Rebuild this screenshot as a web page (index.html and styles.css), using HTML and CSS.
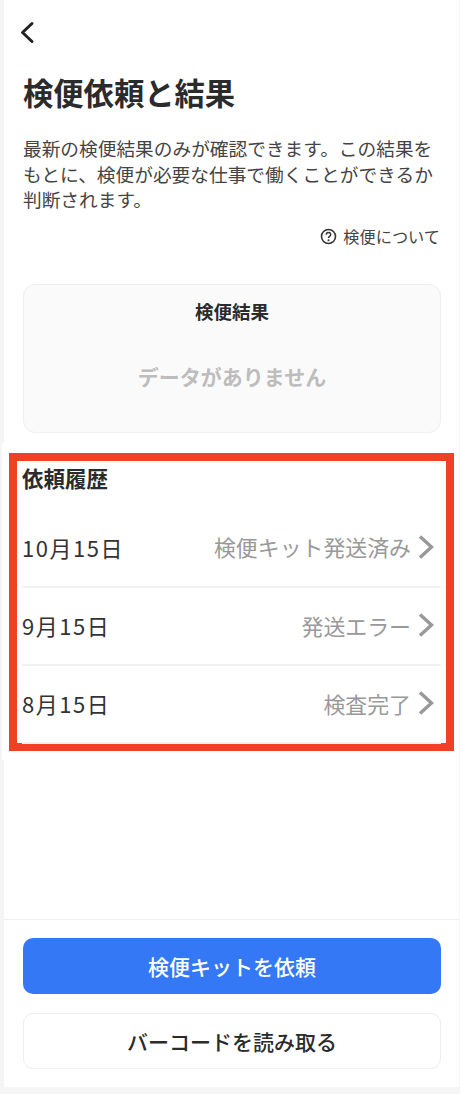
FILE: index.html
```html
<!DOCTYPE html>
<html lang="ja">
<head>
    <meta charset="UTF-8">
    <meta name="viewport" content="width=device-width, initial-scale=1.0">
    <title>検便依頼と結果</title>
    <link rel="stylesheet" href="styles.css">
</head>
<body>
    <div class="screen">
        <div class="top">
            <a class="back" href="#">
                <svg width="16" height="24" viewBox="0 0 16 24"><path d="M13 2.5 3.5 11.5l9.5 9" fill="none" stroke="#222" stroke-width="3" stroke-linecap="round" stroke-linejoin="round"/></svg>
            </a>
            <h1>検便依頼と結果</h1>
            <p class="lead">最新の検便結果のみが確認できます。この結果をもとに、検便が必要な仕事で働くことができるか判断されます。</p>
            <a class="help" href="#">
                <svg width="17" height="17" viewBox="0 0 17 17"><circle cx="8.5" cy="8.5" r="7" fill="none" stroke="#333" stroke-width="1.6"/><path d="M6.3 6.7c0-1.3 1-2.1 2.2-2.1s2.2.8 2.2 2c0 1.7-2.2 1.7-2.2 3.4" fill="none" stroke="#333" stroke-width="1.5"/><circle cx="8.5" cy="12.3" r="1" fill="#333"/></svg>
                検便について
            </a>
            <div class="result-card">
                <h2>検便結果</h2>
                <p class="empty">データがありません</p>
            </div>
        </div>

        <div class="history-wrap">
            <section class="history">
                <h2>依頼履歴</h2>
                <div class="row">
                    <span class="date">10月15日</span>
                    <span class="status">検便キット発送済み</span>
                    <svg class="chevron" width="16" height="24" viewBox="0 0 16 24"><path d="M2 1.5 13.5 12 2 22.5" fill="none" stroke="#999" stroke-width="3.4"/></svg>
                </div>
                <div class="row">
                    <span class="date">9月15日</span>
                    <span class="status">発送エラー</span>
                    <svg class="chevron" width="16" height="24" viewBox="0 0 16 24"><path d="M2 1.5 13.5 12 2 22.5" fill="none" stroke="#999" stroke-width="3.4"/></svg>
                </div>
                <div class="row">
                    <span class="date">8月15日</span>
                    <span class="status">検査完了</span>
                    <svg class="chevron" width="16" height="24" viewBox="0 0 16 24"><path d="M2 1.5 13.5 12 2 22.5" fill="none" stroke="#999" stroke-width="3.4"/></svg>
                </div>
            </section>
        </div>

        <div class="footer">
            <button type="button" class="btn btn-primary">検便キットを依頼</button>
            <button type="button" class="btn btn-outline">バーコードを読み取る</button>
        </div>
    </div>
</body>
</html>
```

FILE: styles.css
```css
* {
    box-sizing: border-box;
}
body {
    margin: 0;
    height: 1094px;
    overflow: hidden;
    background-color: #f5f5f5;
    color: #2b2b2b;
    font-family: "Noto Sans CJK JP", "Noto Sans", sans-serif;
}
.screen {
    display: flex;
    flex-direction: column;
    width: 455px;
    height: 1087px;
    margin-left: 4px;
    background-color: #fff;
}
.top {
    height: 443px;
    padding: 21px 18px 0 19px;
}
.back {
    display: block;
    height: 24px;
    margin-left: -4px;
}
h1 {
    margin: 27px 0 0;
    font-size: 30.3px;
    line-height: 40px;
    font-weight: 700;
}
.lead {
    margin: 23px 0 0;
    font-size: 18.7px;
    line-height: 25.7px;
    color: #444;
}
.help {
    display: flex;
    align-items: center;
    justify-content: flex-end;
    gap: 6px;
    margin: 12px 1px 0 0;
    font-size: 16.2px;
    line-height: 24px;
    color: #444;
    text-decoration: none;
}
.result-card {
    height: 149px;
    margin-top: 36px;
    padding-top: 13px;
    background-color: #fafafa;
    border: 1px solid #eee;
    border-radius: 12px;
    text-align: center;
}
.result-card h2 {
    margin: 0;
    font-size: 18.5px;
    line-height: 26px;
    font-weight: 700;
}
.empty {
    margin: 37px 0 0;
    font-size: 21px;
    line-height: 30px;
    font-weight: 700;
    color: #bdbdbd;
}
.history-wrap {
    width: 454px;
    margin-left: -2px;
    padding: 10px 0 9px 7px;
    background-color: #fff;
}
.history {
    width: 445px;
    height: 298px;
    padding: 0 5px;
    border: 8px solid #ef4123;
}
.history h2 {
    margin: 2px 0 0;
    height: 38px;
    font-size: 21.5px;
    line-height: 30px;
    font-weight: 700;
}
.row {
    display: flex;
    align-items: center;
    height: 78px;
    padding-bottom: 2px;
    border-bottom: 2px solid #f2f2f2;
}
.row:first-of-type {
    height: 87px;
    padding-top: 8px;
}
.date {
    flex: 1;
    font-size: 22px;
    letter-spacing: 1.55px;
    color: #333;
}
.status {
    font-size: 21.9px;
    color: #999;
}
.chevron {
    margin-left: 7px;
    margin-right: 7px;
}
.footer {
    display: flex;
    flex-direction: column;
    gap: 19px;
    margin-top: auto;
    padding: 18px 18px 18px 19px;
    border-top: 1px solid #eee;
}
.btn {
    width: 100%;
    height: 56px;
    border-radius: 10px;
    font-family: inherit;
    font-size: 21px;
    font-weight: 500;
}
.btn-primary {
    background-color: #3478f6;
    color: #fff;
    border: none;
}
.btn-outline {
    background-color: #fff;
    color: #2b2b2b;
    border: 1px solid #eee;
}
```
